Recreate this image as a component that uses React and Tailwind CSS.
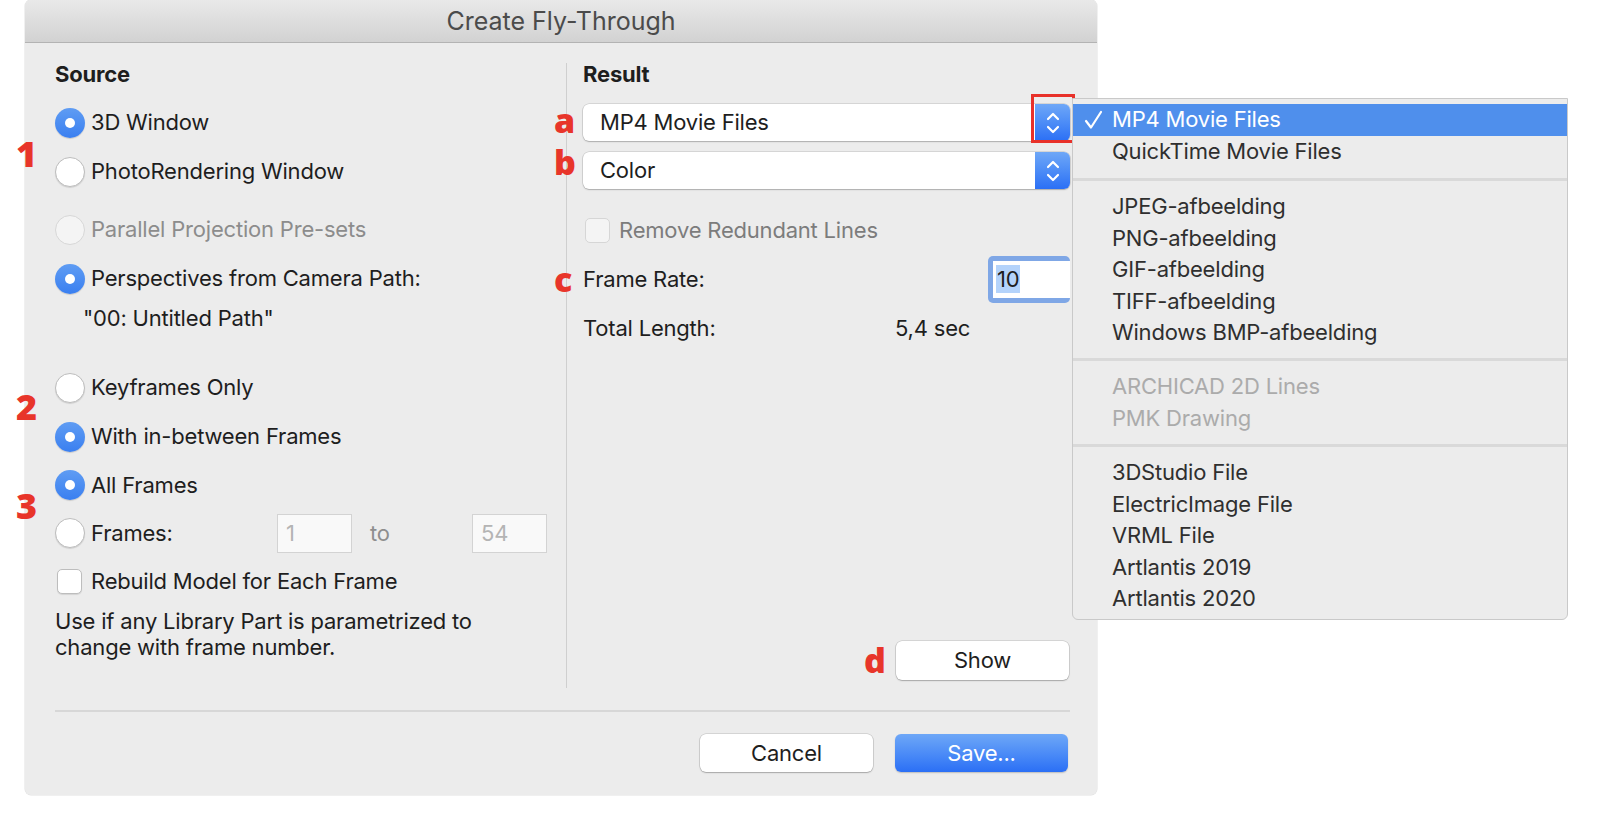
import React from "react";

function Radio({ state }) {
  if (state === "on") {
    return (
      <div className="w-[30px] h-[30px] shrink-0 rounded-full bg-gradient-to-b from-[#5f9cf3] to-[#3a7ff0] flex items-center justify-center shadow-[0_1px_1px_rgba(0,0,0,0.15)]">
        <div className="w-[10px] h-[10px] rounded-full bg-white" />
      </div>
    );
  }
  if (state === "disabled") {
    return <div className="w-[30px] h-[30px] shrink-0 rounded-full bg-[#f4f4f4] border border-[#d7d7d7]" />;
  }
  return <div className="w-[30px] h-[30px] shrink-0 rounded-full bg-white border border-[#bdbdbd] shadow-[0_1px_1px_rgba(0,0,0,0.12)]" />;
}

function RadioRow({ state, children, h = "h-[48px]", dim }) {
  return (
    <div className={`flex items-center gap-[6px] ${h}`}>
      <Radio state={state} />
      <span className={dim ? "text-[#8c8c8c]" : "text-[#1e1e1e]"}>{children}</span>
    </div>
  );
}

function Stepper() {
  return (
    <div className="w-[35px] h-full shrink-0 rounded-r-[6px] bg-gradient-to-b from-[#6ea7f7] to-[#2b6ff5] flex items-center justify-center">
      <svg width="16" height="26" viewBox="0 0 16 26" fill="none" stroke="white" strokeWidth="2.2" strokeLinecap="round" strokeLinejoin="round">
        <path d="M3 9 L8 4 L13 9" />
        <path d="M3 17 L8 22 L13 17" />
      </svg>
    </div>
  );
}

function Popup({ label }) {
  return (
    <div className="flex h-[37px] rounded-[6px] bg-white shadow-[0_0_0_0.5px_rgba(0,0,0,0.18),0_1px_1.5px_rgba(0,0,0,0.2)]">
      <div className="flex-1 flex items-center pl-[17px] text-[#1e1e1e]">{label}</div>
      <Stepper />
    </div>
  );
}

function MenuItem({ children, selected, disabled }) {
  return (
    <div
      className={`relative h-[31.5px] flex items-center pl-[39px] ${
        selected ? "bg-[#4f8fec] text-white" : disabled ? "text-[#ababab]" : "text-[#2f2f2f]"
      }`}
    >
      {selected && (
        <svg className="absolute left-[11px] top-[6px]" width="19" height="20" viewBox="0 0 19 20" fill="none" stroke="white" strokeWidth="2.2" strokeLinecap="round" strokeLinejoin="round">
          <path d="M2 11 L7 17.5 L17 2" />
        </svg>
      )}
      {children}
    </div>
  );
}

function MenuSep({ h }) {
  return (
    <div className={`${h} flex items-center`}>
      <div className="w-full h-[3px] bg-[#d9d9d9]" />
    </div>
  );
}

function RedMark({ children, className }) {
  return (
    <div className={`absolute text-[#e8352a] font-['Open_Sans',sans-serif] font-extrabold leading-none tracking-[0px] ${className}`}>
      {children}
    </div>
  );
}

export default function App() {
  return (
    <div className="relative w-[1606px] h-[814px] bg-white pl-[25px] font-['Inter','Noto_Sans',sans-serif] text-[22px] tracking-[-0.2px] overflow-hidden">
      {/* Dialog */}
      <div className="w-[1072px] h-[795px] rounded-[6px] bg-[#ececec] flex flex-col shadow-[0_0_0_0.5px_rgba(0,0,0,0.12)] overflow-hidden">
        {/* Title bar */}
        <div className="h-[43px] shrink-0 bg-gradient-to-b from-[#e9e9e9] to-[#d2d2d2] border-b border-[#b3b3b3] flex items-center justify-center pt-[2px]">
          <span className="text-[25px] text-[#4b4b4b] tracking-[0px]">Create Fly-Through</span>
        </div>

        {/* Columns */}
        <div className="flex h-[629px] mt-[16px] pl-[30px] pr-[27px]">
          {/* Left */}
          <div className="w-[511px] shrink-0 flex flex-col">
            <div className="h-[30px] flex items-center font-bold text-[#1e1e1e]">Source</div>
            <div className="mt-[9px]">
              <RadioRow state="on" h="h-[49px]">3D Window</RadioRow>
              <RadioRow state="off" h="h-[49px]">PhotoRendering Window</RadioRow>
            </div>
            <div className="mt-[9px]">
              <RadioRow state="disabled" h="h-[49px]" dim>Parallel Projection Pre-sets</RadioRow>
              <RadioRow state="on" h="h-[49px]">Perspectives from Camera Path:</RadioRow>
              <div className="h-[30px] flex items-center pl-[28px] text-[#1e1e1e]">"00: Untitled Path"</div>
            </div>
            <div className="mt-[30px]">
              <RadioRow state="off" h="h-[49px]">Keyframes Only</RadioRow>
              <RadioRow state="on" h="h-[49px]">With in-between Frames</RadioRow>
              <RadioRow state="on">All Frames</RadioRow>
              <div className="flex items-center gap-[6px] h-[48px]">
                <Radio state="off" />
                <span className="w-[180px] text-[#1e1e1e]">Frames:</span>
                <div className="w-[75px] h-[39px] bg-[#f9f9f9] border border-[#d3d3d3] flex items-center pl-[8px] text-[#b4b4b4]">1</div>
                <span className="w-[108px] pl-[12px] text-[#8e8e8e]">to</span>
                <div className="w-[75px] h-[39px] bg-[#f9f9f9] border border-[#d3d3d3] flex items-center pl-[8px] text-[#b4b4b4]">54</div>
              </div>
              <div className="flex items-center gap-[9px] h-[49px]">
                <div className="ml-[2px] w-[25px] h-[25px] rounded-[5px] bg-white border border-[#bdbdbd] shadow-[0_1px_1px_rgba(0,0,0,0.1)]" />
                <span className="text-[#1e1e1e]">Rebuild Model for Each Frame</span>
              </div>
              <div className="mt-[2px] leading-[26px] text-[#1e1e1e]">
                Use if any Library Part is parametrized to
                <br />
                change with frame number.
              </div>
            </div>
          </div>

          {/* Divider */}
          <div className="w-px mt-[4px] h-[625px] bg-[#cfcfcf] shrink-0" />

          {/* Right */}
          <div className="flex-1 pl-[16px] flex flex-col">
            <div className="h-[30px] flex items-center font-bold text-[#1e1e1e]">Result</div>
            <div className="mt-[15px]">
              <Popup label="MP4 Movie Files" />
            </div>
            <div className="mt-[11px]">
              <Popup label="Color" />
            </div>
            <div className="mt-[26px] h-[30px] flex items-center gap-[9px]">
              <div className="ml-[2px] w-[25px] h-[25px] rounded-[5px] bg-[#f4f4f4] border border-[#d6d6d6]" />
              <span className="text-[#7c7c7c]">Remove Redundant Lines</span>
            </div>
            <div className="mt-[10px] h-[48px] flex items-center justify-between">
              <span className="text-[#1e1e1e]">Frame Rate:</span>
              <div className="w-[82px] h-[47px] rounded-[5px] bg-[#7fa7e6] p-[5px] pr-0">
                <div className="w-full h-full bg-white flex items-center pl-[3px]">
                  <span className="bg-[#b4d3fb] text-[#1e1e1e] px-[1px] leading-[28px]">10</span>
                </div>
              </div>
            </div>
            <div className="mt-[10px] h-[30px] flex items-center">
              <span className="w-[312px] text-[#1e1e1e]">Total Length:</span>
              <span className="text-[#1e1e1e]">5,4 sec</span>
            </div>
            <div className="mt-auto mb-[8px] flex justify-end pr-[1px]">
              <button className="w-[173px] h-[39px] rounded-[6px] bg-white text-[#1e1e1e] shadow-[0_0_0_0.5px_rgba(0,0,0,0.2),0_1px_1.5px_rgba(0,0,0,0.22)]">
                Show
              </button>
            </div>
          </div>
        </div>

        {/* Separator */}
        <div className="mt-[22px] ml-[30px] mr-[27px] h-[2px] bg-[#d7d7d7]" />

        {/* Buttons */}
        <div className="mt-[22px] flex justify-end gap-[22px] pr-[29px]">
          <button className="w-[173px] h-[38px] rounded-[6px] bg-white text-[#1e1e1e] shadow-[0_0_0_0.5px_rgba(0,0,0,0.2),0_1px_1.5px_rgba(0,0,0,0.22)]">
            Cancel
          </button>
          <button className="w-[173px] h-[38px] rounded-[6px] bg-gradient-to-b from-[#6ea7f7] to-[#2b6ff5] text-white shadow-[0_1px_1.5px_rgba(0,0,0,0.2)]">
            Save...
          </button>
        </div>
      </div>

      {/* Red highlight box around stepper */}
      <div className="absolute left-[1031px] top-[94px] w-[44px] h-[49px] border-[3px] border-[#e8312a]" />

      {/* Dropdown menu */}
      <div className="absolute left-[1072px] top-[98px] w-[496px] h-[522px] rounded-b-[6px] bg-[#ececec] border border-[#c9c9c9] pt-[5px]">
        <MenuItem selected>MP4 Movie Files</MenuItem>
        <MenuItem>QuickTime Movie Files</MenuItem>
        <MenuSep h="h-[24px]" />
        <MenuItem>JPEG-afbeelding</MenuItem>
        <MenuItem>PNG-afbeelding</MenuItem>
        <MenuItem>GIF-afbeelding</MenuItem>
        <MenuItem>TIFF-afbeelding</MenuItem>
        <MenuItem>Windows BMP-afbeelding</MenuItem>
        <MenuSep h="h-[22.5px]" />
        <MenuItem disabled>ARCHICAD 2D Lines</MenuItem>
        <MenuItem disabled>PMK Drawing</MenuItem>
        <MenuSep h="h-[23px]" />
        <MenuItem>3DStudio File</MenuItem>
        <MenuItem>ElectricImage File</MenuItem>
        <MenuItem>VRML File</MenuItem>
        <MenuItem>Artlantis 2019</MenuItem>
        <MenuItem>Artlantis 2020</MenuItem>
      </div>

      {/* Red annotation marks */}
      <RedMark className="left-[16px] top-[136px] text-[36px]">1</RedMark>
      <RedMark className="left-[16px] top-[389px] text-[36px]">2</RedMark>
      <RedMark className="left-[16px] top-[488px] text-[36px]">3</RedMark>
      <RedMark className="left-[554px] top-[103px] text-[34px]">a</RedMark>
      <RedMark className="left-[554px] top-[145px] text-[34px]">b</RedMark>
      <RedMark className="left-[554px] top-[262px] text-[34px]">c</RedMark>
      <RedMark className="left-[864px] top-[643px] text-[34px]">d</RedMark>
    </div>
  );
}
